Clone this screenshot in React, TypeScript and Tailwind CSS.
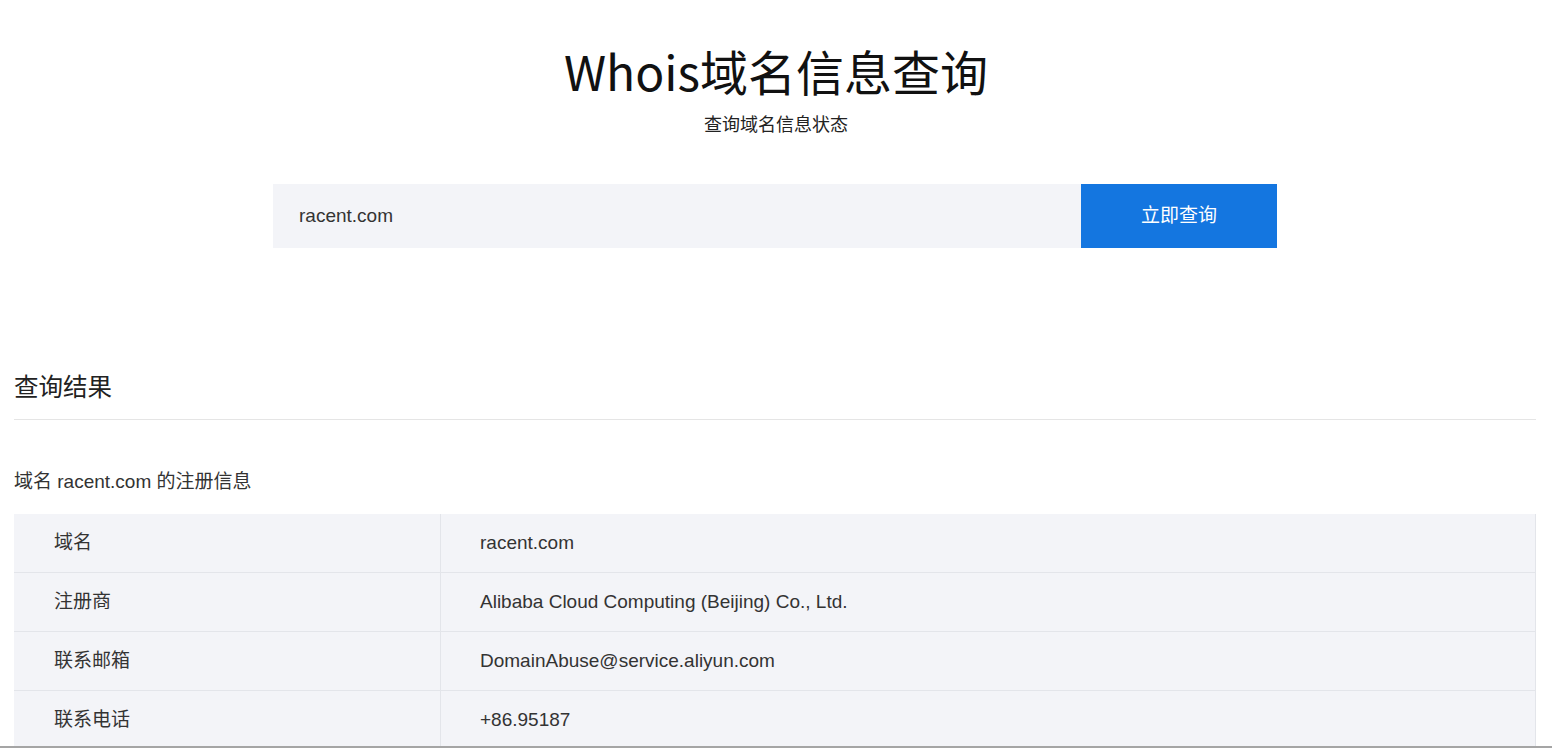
import React from "react";

const rows: [string, string][] = [
  ["域名", "racent.com"],
  ["注册商", "Alibaba Cloud Computing (Beijing) Co., Ltd."],
  ["联系邮箱", "DomainAbuse@service.aliyun.com"],
  ["联系电话", "+86.95187"],
];

export default function App() {
  return (
    <div
      className="min-h-screen bg-white text-[#333]"
      style={{ fontFamily: '"Liberation Sans", "Noto Sans CJK SC", sans-serif' }}
    >
      <div className="pt-[34px] flex flex-col items-center">
        <h1
          className="text-[48px] leading-[72px] text-[#111] font-normal"
          style={{ fontFamily: '"Noto Sans CJK SC", sans-serif' }}
        >
          Whois域名信息查询
        </h1>
        <p className="mt-[5px] text-[18px] leading-[24px] text-[#222]" style={{ fontFamily: '"Noto Sans CJK SC", sans-serif' }}>
          查询域名信息状态
        </p>
        <div className="mt-[49px] mr-[2px] flex w-[1004px] h-[64px]">
          <div className="flex-1 bg-[#f3f4f8] flex items-center pl-[26px] text-[19px] text-[#333]">
            racent.com
          </div>
          <button className="w-[196px] bg-[#1476e0] text-white text-[19px] flex items-center justify-center">
            立即查询
          </button>
        </div>
      </div>
      <div className="pl-[14px] pr-[16px] mt-[124px]">
        <div className="border-b border-[#e5e5e5] pb-[15px]">
          <h2 className="text-[24.5px] leading-[32px] text-[#222] font-normal">查询结果</h2>
        </div>
        <p className="mt-[50px] text-[19px] leading-[24px] text-[#333]">域名 racent.com 的注册信息</p>
        <div className="mt-[20px] bg-[#f3f4f8] border-r border-[#e3e5ea]">
          {rows.map(([k, v], i) => (
            <div
              key={k}
              className={`flex h-[59px] ${i < rows.length - 1 ? "border-b border-[#e3e5ea]" : ""}`}
            >
              <div className="w-[427px] border-r border-[#e3e5ea] flex items-center pl-[40px] text-[19px]">
                {k}
              </div>
              <div className="flex-1 flex items-center pl-[39px] text-[19px]">{v}</div>
            </div>
          ))}
        </div>
      </div>
      <div className="fixed left-0 right-0 bottom-0 h-[2px] bg-[#a5a5a5]" />
    </div>
  );
}
